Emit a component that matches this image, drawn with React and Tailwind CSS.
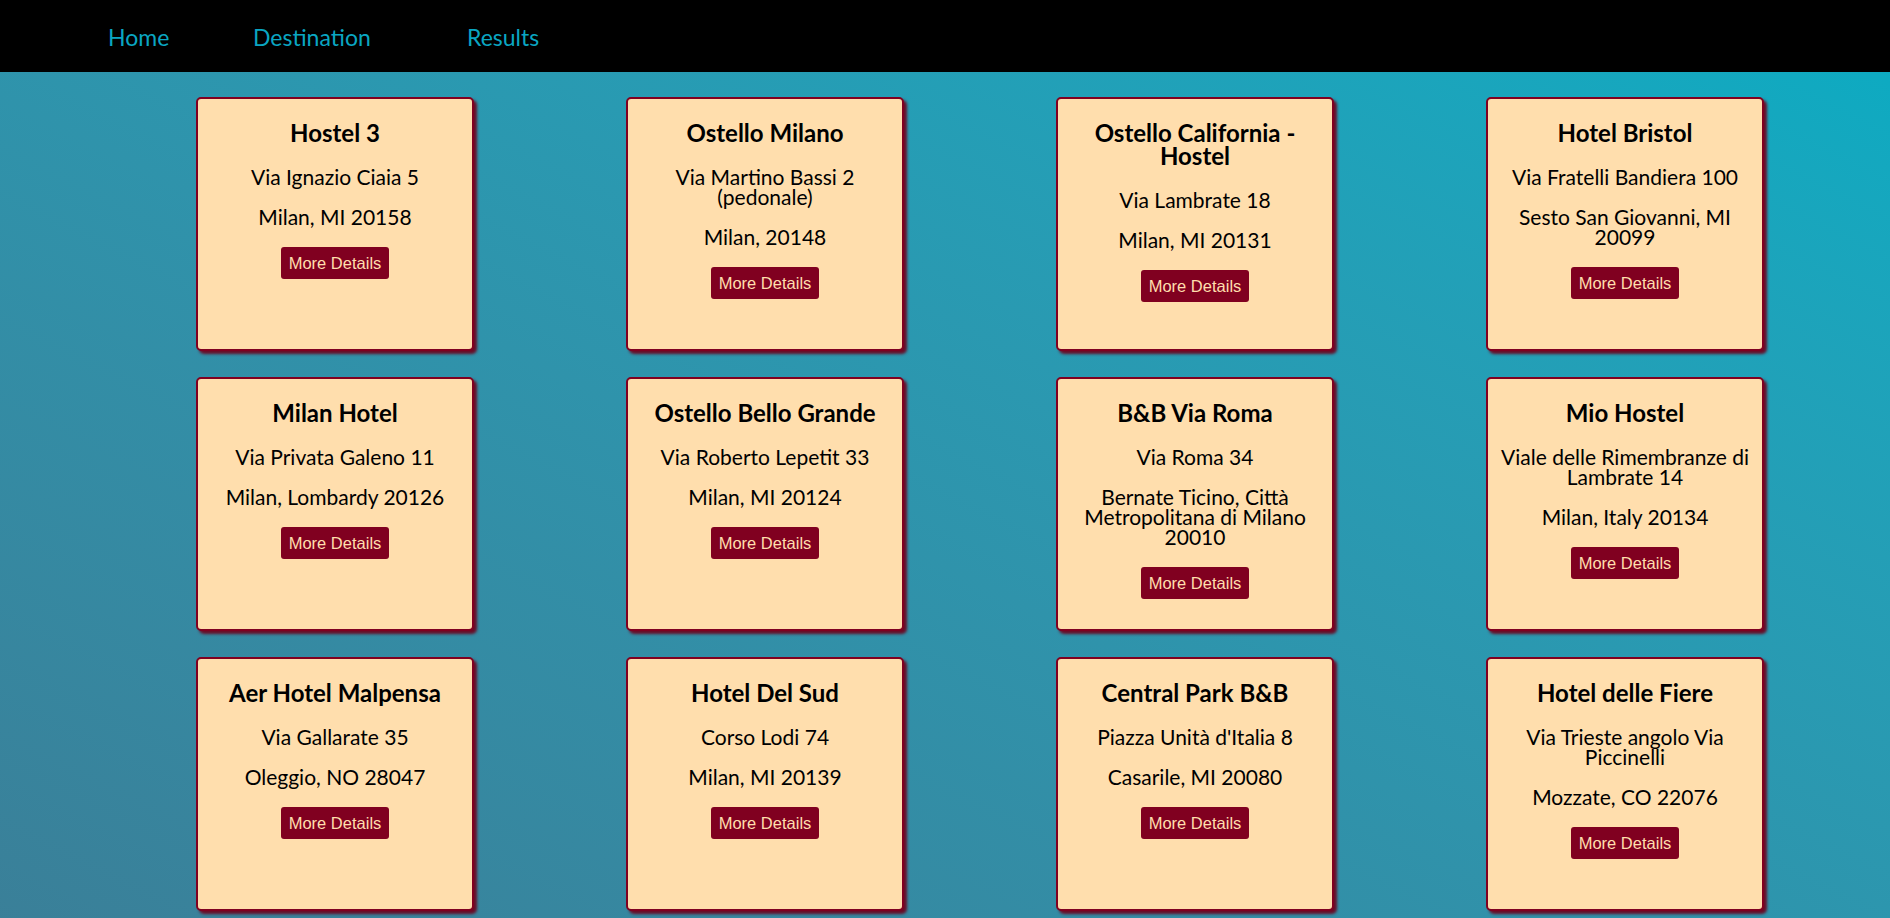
import React from "react";

const hotels = [
  { name: "Hostel 3", lines: ["Via Ignazio Ciaia 5", "Milan, MI 20158"] },
  { name: "Ostello Milano", lines: ["Via Martino Bassi 2 (pedonale)", "Milan, 20148"] },
  { name: "Ostello California - Hostel", lines: ["Via Lambrate 18", "Milan, MI 20131"] },
  { name: "Hotel Bristol", lines: ["Via Fratelli Bandiera 100", "Sesto San Giovanni, MI 20099"] },
  { name: "Milan Hotel", lines: ["Via Privata Galeno 11", "Milan, Lombardy 20126"] },
  { name: "Ostello Bello Grande", lines: ["Via Roberto Lepetit 33", "Milan, MI 20124"] },
  { name: "B&B Via Roma", lines: ["Via Roma 34", "Bernate Ticino, Città Metropolitana di Milano 20010"] },
  { name: "Mio Hostel", lines: ["Viale delle Rimembranze di Lambrate 14", "Milan, Italy 20134"] },
  { name: "Aer Hotel Malpensa", lines: ["Via Gallarate 35", "Oleggio, NO 28047"] },
  { name: "Hotel Del Sud", lines: ["Corso Lodi 74", "Milan, MI 20139"] },
  { name: "Central Park B&B", lines: ["Piazza Unità d'Italia 8", "Casarile, MI 20080"] },
  { name: "Hotel delle Fiere", lines: ["Via Trieste angolo Via Piccinelli", "Mozzate, CO 22076"] },
];

function Card({ hotel }) {
  return (
    <div className="h-[254px] w-[278px] rounded-[5px] border-2 border-[#800020] bg-[#ffdead] px-[12px] pt-[22px] text-center text-black shadow-[3px_3px_3px_#6a0c26] flex flex-col items-center">
      <h2 className="text-[24px] leading-[23px] font-bold">{hotel.name}</h2>
      <p className="mt-[23px] text-[21px] leading-[20px]">{hotel.lines[0]}</p>
      <p className="mt-[20px] text-[21px] leading-[20px]">{hotel.lines[1]}</p>
      <button
        className="mt-[20px] rounded-[3px] bg-[#800020] px-[8px] py-[7px] text-[16.5px] leading-[18px] text-[#ffdead]"
        style={{ fontFamily: '"Liberation Sans", Arial, sans-serif' }}
      >
        More Details
      </button>
    </div>
  );
}

export default function App() {
  return (
    <div className="min-h-screen font-['Lato',sans-serif] bg-linear-to-tr from-[#3a7f98] to-[#06acc3]">
      <nav className="flex h-[72px] items-center bg-black pt-[3px] text-[23px] text-[#0aa6c2]">
        <a className="ml-[108px] w-[145px]">Home</a>
        <a className="w-[214px]">Destination</a>
        <a>Results</a>
      </nav>
      <main className="grid grid-cols-[repeat(4,278px)] gap-x-[152px] gap-y-[26px] pb-[30px] pl-[196px] pt-[25px]">
        {hotels.map((h) => (
          <Card key={h.name} hotel={h} />
        ))}
      </main>
    </div>
  );
}
